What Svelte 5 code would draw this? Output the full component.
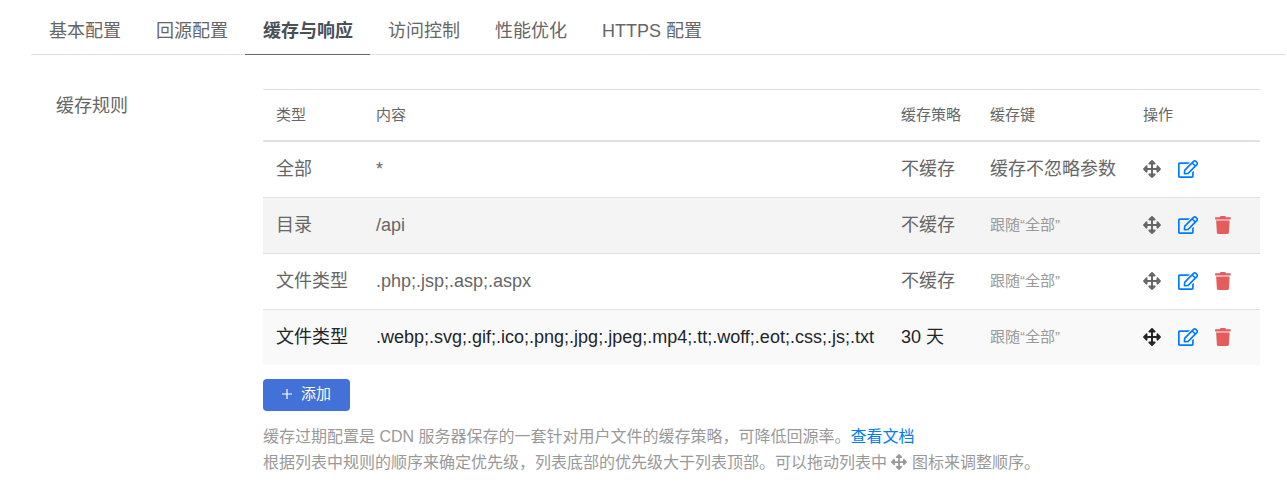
<script>
  const tabs = ['基本配置', '回源配置', '缓存与响应', '访问控制', '性能优化', 'HTTPS 配置'];
  const rows = [
    { type: '全部', content: '*', policy: '不缓存', key: '缓存不忽略参数', own: true },
    { type: '目录', content: '/api', policy: '不缓存', key: '跟随“全部”', shade: true },
    { type: '文件类型', content: '.php;.jsp;.asp;.aspx', policy: '不缓存', key: '跟随“全部”' },
    { type: '文件类型', content: '.webp;.svg;.gif;.ico;.png;.jpg;.jpeg;.mp4;.tt;.woff;.eot;.css;.js;.txt', policy: '30 天', key: '跟随“全部”', hover: true }
  ];
  let active = $state(2);
</script>

{#snippet move()}
  <svg class="move" viewBox="0 0 512 512" aria-hidden="true"><path fill="currentColor" d="M352.201 425.775l-79.196 79.196c-9.373 9.373-24.568 9.373-33.941 0l-79.196-79.196c-15.119-15.119-4.411-40.971 16.971-40.97h51.162L228 284H127.196v51.162c0 21.382-25.851 32.09-40.971 16.971L7.029 272.937c-9.373-9.373-9.373-24.569 0-33.941L86.225 159.8c15.119-15.119 40.971-4.411 40.971 16.971V228H228V127.196h-51.23c-21.382 0-32.09-25.851-16.971-40.971l79.196-79.196c9.373-9.373 24.568-9.373 33.941 0l79.196 79.196c15.119 15.119 4.411 40.971-16.971 40.971h-51.162V228h100.804v-51.162c0-21.382 25.851-32.09 40.97-16.971l79.196 79.196c9.373 9.373 9.373 24.569 0 33.941L425.773 352.2c-15.119 15.119-40.971 4.411-40.97-16.971V284H284v100.804h51.23c21.382 0 32.09 25.851 16.971 40.971z"/></svg>
{/snippet}

<main>
  <nav>
    {#each tabs as tab, i}
      <button class="tab" class:active={i === active} onclick={() => (active = i)}>{tab}</button>
    {/each}
  </nav>
  <section>
    <h2>缓存规则</h2>
    <div class="body">
      <table>
        <thead>
          <tr><th class="c-type">类型</th><th>内容</th><th class="c-policy">缓存策略</th><th class="c-key">缓存键</th><th class="c-ops">操作</th></tr>
        </thead>
        <tbody>
          {#each rows as r}
            <tr class:shade={r.shade} class:hover={r.hover}>
              <td>{r.type}</td>
              <td>{r.content}</td>
              <td>{r.policy}</td>
              <td class:muted={!r.own}>{r.key}</td>
              <td>
                <div class="ops">
                  <button class="icon" aria-label="移动">{@render move()}</button>
                  <button class="icon edit" aria-label="编辑">
                    <svg viewBox="0 0 576 512" aria-hidden="true"><path fill="currentColor" d="M402.3 344.9l32-32c5-5 13.7-1.5 13.7 5.7V464c0 26.5-21.5 48-48 48H48c-26.5 0-48-21.5-48-48V112c0-26.5 21.5-48 48-48h273.5c7.1 0 10.7 8.6 5.7 13.7l-32 32c-1.5 1.5-3.5 2.3-5.7 2.3H48v352h352V350.5c0-2.1.8-4.1 2.3-5.6zm156.6-201.8L296.3 405.7l-90.4 10c-26.2 2.9-48.5-19.2-45.6-45.6l10-90.4L432.9 17.1c22.9-22.9 59.9-22.9 82.7 0l43.2 43.2c22.9 22.9 22.9 60 .1 82.8zM460.1 174L402 115.9 216.2 301.8l-7.3 65.3 65.3-7.3L460.1 174zm64.8-79.7l-43.2-43.2c-4.1-4.1-10.8-4.1-14.8 0L436 82l58.1 58.1 30.9-30.9c4-4.2 4-10.8-.1-14.9z"/></svg>
                  </button>
                  {#if !r.own}
                    <button class="icon trash" aria-label="删除">
                      <svg viewBox="0 0 448 512" aria-hidden="true"><path fill="currentColor" d="M432 32H312l-9.400-18.700A24 24 0 0 0 281.100 0H166.800a23.720 23.720 0 0 0-21.400 13.300L136 32H16A16 16 0 0 0 0 48v32a16 16 0 0 0 16 16h416a16 16 0 0 0 16-16V48a16 16 0 0 0-16-16zM53.200 467a48 48 0 0 0 47.900 45h245.800a48 48 0 0 0 47.900-45L416 128H32z"/></svg>
                    </button>
                  {/if}
                </div>
              </td>
            </tr>
          {/each}
        </tbody>
      </table>
      <button class="add"><svg viewBox="0 0 10 10" aria-hidden="true"><path d="M5 0v10M0 5h10" stroke="currentColor" stroke-width="1.2"/></svg>添加</button>
      <p>缓存过期配置是 CDN 服务器保存的一套针对用户文件的缓存策略，可降低回源率。<a href="#docs">查看文档</a></p>
      <p>根据列表中规则的顺序来确定优先级，列表底部的优先级大于列表顶部。可以拖动列表中 <span class="inline">{@render move()}</span> 图标来调整顺序。</p>
    </div>
  </section>
</main>

<style>
  :global(body) { background: #fff; }
  main, button { font-family: "Liberation Sans", "Noto Sans CJK SC", sans-serif; }
  main { color: #666; font-size: 18px; line-height: 28px; padding: 8px 2px 0 31px; }
  button { border: 0; background: none; padding: 0; margin: 0; color: inherit; cursor: pointer; }
  nav { display: flex; border-bottom: 1px solid #dee2e6; }
  .tab { font-size: 18px; line-height: 28px; height: 47px; padding: 0 17px 0 18px; margin-bottom: -1px; border-bottom: 1px solid transparent; }
  .active { font-weight: bold; color: #495057; border-bottom-color: #666; }
  section { display: flex; padding: 34px 25px 0; }
  h2 { flex: 0 0 207px; margin: 0; font-size: 18px; line-height: 34px; font-weight: normal; }
  .body { flex: 1; min-width: 0; }
  table { width: 100%; table-layout: fixed; border-collapse: collapse; }
  th, td { text-align: left; padding: 0 0 0 13px; white-space: nowrap; border-top: 1px solid #dee2e6; }
  th { height: 50px; font-size: 15px; font-weight: normal; border-bottom: 2px solid #dee2e6; }
  td { height: 53px; padding-bottom: 2px; }
  .c-type { width: 87px; }
  .c-policy { width: 76px; }
  .c-key { width: 140px; }
  .c-ops { width: 117px; }
  .shade { background: #f4f4f4; }
  .hover { background: #f9f9f9; color: #212529; }
  td.muted { color: #999; font-size: 15px; }
  .ops { display: flex; align-items: center; gap: 17px; }
  .icon { display: flex; }
  svg { height: 18px; display: block; }
  .edit { color: #007bff; }
  .trash { color: #e45d5c; }
  .add { display: flex; align-items: center; gap: 9px; height: 32px; margin: 14px 0 13px; padding: 0 19px 2px; border-radius: 4px; background: #4271d8; color: #fff; font-size: 15px; line-height: 28px; }
  .add svg { height: 10px; }
  p { margin: 0; color: #999; font-size: 16px; line-height: 26px; }
  a { color: #007bff; text-decoration: none; }
  .inline { display: inline-block; vertical-align: -2px; }
  .inline svg { height: 16px; }
</style>
